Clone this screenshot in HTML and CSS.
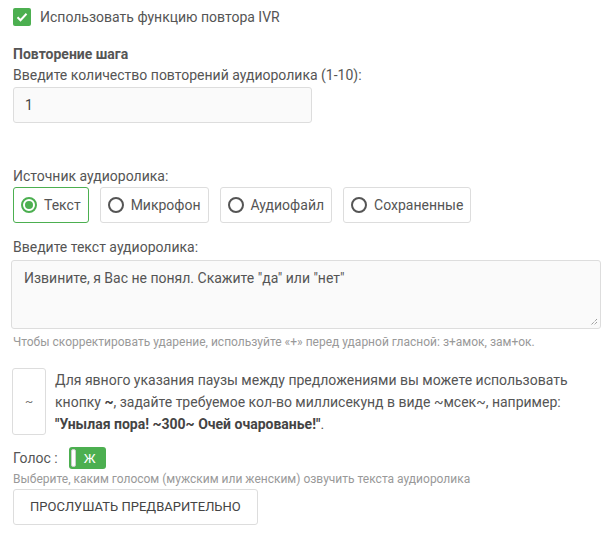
FILE: index.html
```html
<!DOCTYPE html>
<html lang="ru">
<head>
    <meta charset="UTF-8">
    <title>IVR</title>
    <link rel="stylesheet" href="styles.css">
</head>
<body>
    <div class="page">
        <label class="check">
            <span class="check-box">
                <svg width="12" height="10" viewBox="0 0 12 10"><path d="M1.5 5.2 L4.5 8.2 L10.5 1.8" fill="none" stroke="#fff" stroke-width="2"/></svg>
            </span>
            Использовать функцию повтора IVR
        </label>

        <div class="section-title">Повторение шага</div>
        <div class="label">Введите количество повторений аудиоролика (1-10):</div>
        <div class="input">1</div>

        <div class="label source-label">Источник аудиоролика:</div>
        <div class="radios">
            <div class="radio active"><span class="dot"></span>Текст</div>
            <div class="radio"><span class="dot"></span>Микрофон</div>
            <div class="radio"><span class="dot"></span>Аудиофайл</div>
            <div class="radio"><span class="dot"></span>Сохраненные</div>
        </div>

        <div class="label text-label">Введите текст аудиоролика:</div>
        <div class="textarea">
            Извините, я Вас не понял. Скажите "да" или "нет"
            <svg class="grip" width="8" height="8" viewBox="0 0 8 8"><path d="M7 1 L1 7 M7 4 L4 7" stroke="#777" stroke-width="1" stroke-dasharray="1 1"/></svg>
        </div>
        <div class="hint">Чтобы скорректировать ударение, используйте «+» перед ударной гласной: з+амок, зам+ок.</div>

        <div class="pause">
            <div class="tilde">~</div>
            <p>Для явного указания паузы между предложениями вы можете использовать кнопку <b>~</b>, задайте требуемое кол-во миллисекунд в виде ~мсек~, например: <b>"Унылая пора! ~300~ Очей очарованье!"</b>.</p>
        </div>

        <div class="voice">
            <span>Голос :</span>
            <span class="toggle"><span class="knob"></span>Ж</span>
        </div>
        <div class="hint voice-hint">Выберите, каким голосом (мужским или женским) озвучить текста аудиоролика</div>
        <div class="btn">Прослушать предварительно</div>
    </div>
</body>
</html>
```

FILE: styles.css
```css
html,body{margin: 0; padding: 0; background: #fff;}
body{font-family: Roboto, "Liberation Sans", sans-serif; font-size: 14px; color: #555;}
.page{padding: 8px 13px 0 13px;}

.check{display: flex; align-items: center; gap: 9px; height: 18px; line-height: 18px;}
.check-box{width: 18px; height: 18px; border-radius: 2px; background: #4caf50; display: flex; align-items: center; justify-content: center;}

.section-title{font-weight: bold; margin-top: 19px; line-height: 18px;}
.label{line-height: 18px; margin-top: 3px;}
.input{
    width: 274px;
    height: 34px;
    line-height: 34px;
    margin-top: 3px;
    padding: 0 12px 0 11px;
    border: 1px solid #ddd;
    border-radius: 3px;
    background: #fafafa;
    color: #444;
}

.source-label{margin-top: 44px;}
.radios{display: flex; gap: 11px; margin-top: 2px;}
.radio{
    display: flex;
    align-items: center;
    gap: 7px;
    height: 34px;
    padding: 0 7px;
    border: 1px solid #ddd;
    border-radius: 3px;
    color: #555;
}
.radio .dot{width: 16px; height: 16px; border: 2px solid #555; border-radius: 50%; box-sizing: border-box; position: relative;}
.radio.active{border-color: #4caf50;}
.radio.active .dot{border-color: #4caf50;}
.radio.active .dot:after{content: ""; position: absolute; left: 2px; top: 2px; width: 8px; height: 8px; border-radius: 50%; background: #4caf50;}

.text-label{margin-top: 15px;}
.textarea{
    position: relative;
    margin: 4px 0 0 -2px;
    width: 565px;
    height: 59px;
    padding: 8px 11px 0 12px;
    border: 1px solid #ddd;
    border-radius: 3px;
    background: #fafafa;
    line-height: 18px;
    color: #555;
}
.grip{position: absolute; right: 2px; bottom: 2px;}
.hint{font-size: 12px; color: #999; line-height: 16px; margin-top: 5px;}

.pause{display: flex; gap: 9px; margin-top: 18px; margin-left: -1px;}
.tilde{
    flex: none;
    width: 32px;
    height: 65px;
    border: 1px solid #ddd;
    border-radius: 3px;
    display: flex;
    align-items: center;
    justify-content: center;
    color: #777;
    font-size: 12px;
}
.pause p{margin: 1px 0 0 0; line-height: 22px; color: #555;}
.pause b{color: #444;}

.voice{display: flex; align-items: center; gap: 11px; margin-top: 12px; height: 22px;}
.toggle{
    display: flex;
    align-items: center;
    width: 37px;
    height: 22px;
    border-radius: 3px;
    background: #4caf50;
    color: #fff;
    font-size: 13px;
    box-sizing: border-box;
    padding: 2px;
    gap: 8px;
}
.toggle .knob{width: 5px; height: 18px; background: #fff; border-radius: 2px; box-sizing: border-box; border: 1px solid #ccc;}
.voice-hint{margin-top: 2px;}
.btn{
    display: inline-block;
    margin-top: 2px;
    height: 34px;
    line-height: 34px;
    padding: 0 16px;
    border: 1px solid #ddd;
    border-radius: 3px;
    text-transform: uppercase;
    font-size: 13px;
    color: #444;
}
```
